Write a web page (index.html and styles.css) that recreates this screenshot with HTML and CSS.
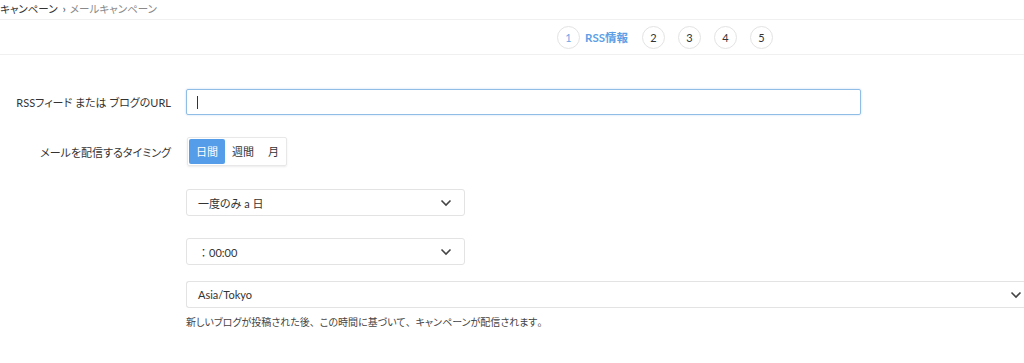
FILE: index.html
```html
<!DOCTYPE html>
<html lang="ja">
<head>
<meta charset="utf-8">
<link rel="stylesheet" href="styles.css">
</head>
<body>
<div class="breadcrumb"><span class="bc-root">キャンペーン</span><span class="bc-sep">›</span><span class="bc-current">メールキャンペーン</span></div>
<div class="steps">
  <div class="step active"><span class="circle">1</span><span class="step-label">RSS情報</span></div>
  <div class="step"><span class="circle">2</span></div>
  <div class="step"><span class="circle">3</span></div>
  <div class="step"><span class="circle">4</span></div>
  <div class="step"><span class="circle">5</span></div>
</div>
<div class="form">
  <div class="row row-url">
    <label class="label">RSSフィード または ブログのURL</label>
    <div class="field"><div class="input"><span class="caret"></span></div></div>
  </div>
  <div class="row row-timing">
    <label class="label">メールを配信するタイミング</label>
    <div class="field">
      <div class="btn-group">
        <span class="btn on">日間</span><span class="btn">週間</span><span class="btn">月</span>
      </div>
    </div>
  </div>
  <div class="row row-sel1">
    <div class="label"></div>
    <div class="field"><div class="select short"><span>一度のみ a 日</span><svg class="chev" viewBox="0 0 12 8" width="12" height="8"><path d="M1.5 1.5 L6 6 L10.5 1.5" fill="none" stroke="#444" stroke-width="1.6"/></svg></div></div>
  </div>
  <div class="row row-sel2">
    <div class="label"></div>
    <div class="field"><div class="select short"><span class="plain">：00:00</span><svg class="chev" viewBox="0 0 12 8" width="12" height="8"><path d="M1.5 1.5 L6 6 L10.5 1.5" fill="none" stroke="#444" stroke-width="1.6"/></svg></div></div>
  </div>
  <div class="row row-sel3">
    <div class="label"></div>
    <div class="field">
      <div class="select wide"><span>Asia/Tokyo</span><svg class="chev" viewBox="0 0 12 8" width="12" height="8"><path d="M1.5 1.5 L6 6 L10.5 1.5" fill="none" stroke="#444" stroke-width="1.6"/></svg></div>
      <p class="help">新しいブログが投稿された後<span class="plain">、</span>この時間に基づいて<span class="plain">、</span>キャンペーンが配信されます<span class="plain">。</span></p>
    </div>
  </div>
</div>
</body>
</html>
```
FILE: styles.css
```css
html, body {
  margin: 0;
  padding: 0;
  background: #fff;
  overflow: hidden;
}
body {
  font-family: Lato, "Noto Sans CJK JP", sans-serif;
  font-size: 11px;
  color: #333;
  width: 1024px;
  font-feature-settings: "palt";
}
.plain { font-feature-settings: normal; }
.breadcrumb {
  height: 19px;
  line-height: 17px;
  border-bottom: 1px solid #f0f0f0;
  font-size: 10.5px;
  white-space: nowrap;
}
.bc-root { color: #333; }
.bc-sep { color: #555; margin: 0 4px 0 5px; font-size: 12px; }
.bc-current { color: #8a8a8a; }
.steps {
  height: 34px;
  border-bottom: 1px solid #f0f0f0;
  display: flex;
  align-items: center;
  padding-left: 557px;
  gap: 13px;
}
.step {
  display: flex;
  align-items: center;
  gap: 5px;
}
.circle {
  width: 21px;
  height: 21px;
  border: 1px solid #e3e3e3;
  border-radius: 50%;
  display: flex;
  align-items: center;
  justify-content: center;
  font-size: 11px;
  color: #333;
}
.step.active .circle { color: #6ba6e6; }
.step-label {
  color: #5d9fe6;
  font-weight: bold;
  font-size: 11.5px;
  margin-right: 1px;
}
.form {
  padding-top: 34px;
}
.row {
  display: flex;
  align-items: center;
}
.label {
  width: 171px;
  padding-right: 15px;
  text-align: right;
  flex: none;
  font-size: 11px;
  color: #333;
}
.field { flex: none; }
.input {
  width: 663px;
  height: 24px;
  border: 1px solid #90bde6;
  border-radius: 2px;
  box-shadow: 0 0 2px rgba(102, 160, 220, 0.45);
  display: flex;
  align-items: center;
  padding-left: 10px;
}
.caret {
  width: 1px;
  height: 13px;
  background: #333;
}
.row-timing { margin-top: 22px; }
.btn-group {
  display: flex;
  white-space: nowrap;
  border: 1px solid #e8e8e8;
  border-radius: 2px;
  box-shadow: 0 1px 2px rgba(0,0,0,0.08);
  padding: 1px;
  margin-left: 1px;
}
.btn {
  height: 25px;
  line-height: 25px;
  padding: 0 7px;
  font-size: 11px;
  color: #333;
  font-feature-settings: normal;
}
.btn:last-child { padding-right: 6px; }
.btn.on {
  background: #559de8;
  color: #fff;
  border-radius: 2px;
}
.row-sel1 { margin-top: 23px; }
.row-sel2 { margin-top: 22px; }
.row-sel3 { margin-top: 16px; align-items: flex-start; }
.select {
  border: 1px solid #e3e3e3;
  border-radius: 3px;
  display: flex;
  align-items: center;
  justify-content: space-between;
  padding: 0 12px 0 11px;
  box-sizing: border-box;
  height: 27px;
  font-size: 11px;
  color: #333;
}
.select.short { width: 279px; }
.select.wide {
  width: 850px;
  padding-right: 14px;
  border-right: none;
  border-radius: 3px 0 0 3px;
}
.chev { flex: none; }
.help {
  margin: 6px 0 0;
  font-size: 10px;
  color: #444;
}
```
